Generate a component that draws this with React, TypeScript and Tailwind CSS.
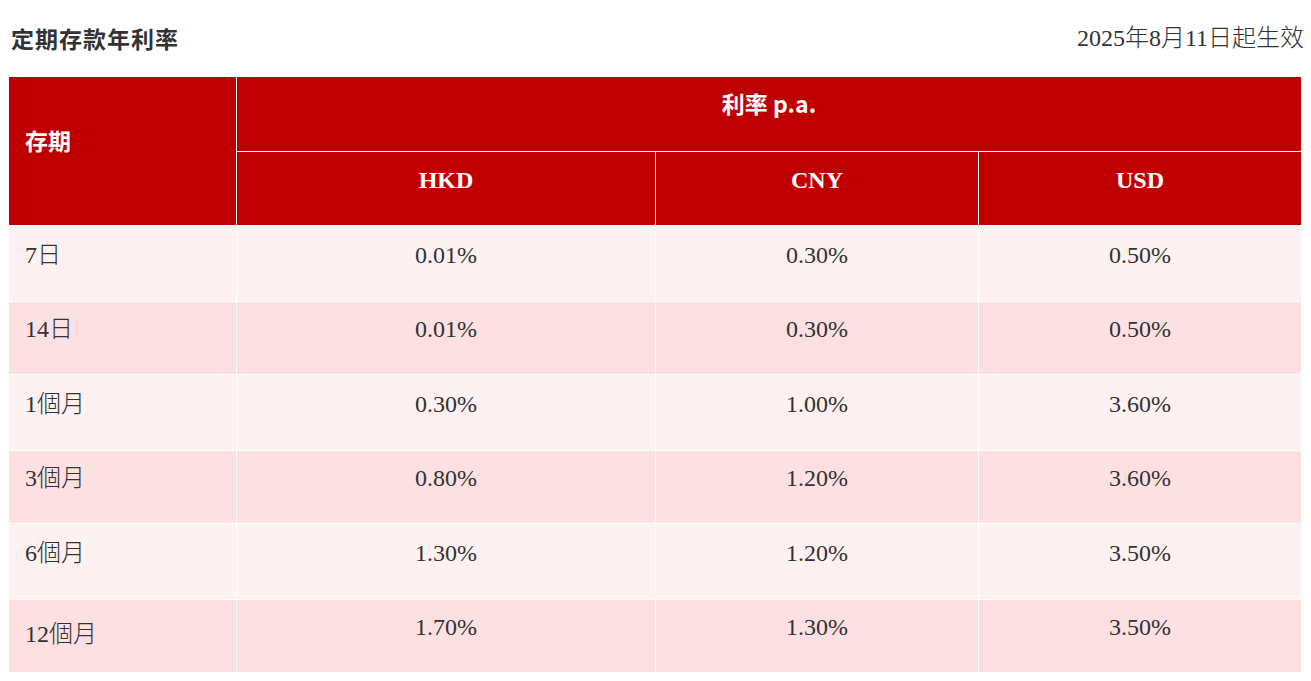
import React from "react";

const serif = "font-['Liberation_Serif','Noto_Sans_CJK_TC',serif]";
const sans = "font-['Noto_Sans_CJK_TC','Noto_Sans',sans-serif]";

const rows = [
  { term: "7日", hkd: "0.01%", cny: "0.30%", usd: "0.50%" },
  { term: "14日", hkd: "0.01%", cny: "0.30%", usd: "0.50%" },
  { term: "1個月", hkd: "0.30%", cny: "1.00%", usd: "3.60%" },
  { term: "3個月", hkd: "0.80%", cny: "1.20%", usd: "3.60%" },
  { term: "6個月", hkd: "1.30%", cny: "1.20%", usd: "3.50%" },
  { term: "12個月", hkd: "1.70%", cny: "1.30%", usd: "3.50%" },
];

export default function App() {
  return (
    <div className="w-[1311px] h-[681px] bg-white overflow-hidden">
      <div className="flex items-center justify-between h-[76px] pl-[11px] pr-[7px]">
        <h2 className={`${sans} text-[23px] leading-[32px] tracking-[1px] font-bold text-[#333]`}>
          定期存款年利率
        </h2>
        <div className={`${serif} text-[24px] leading-[32px] font-light text-[#333]`}>
          2025年8月11日起生效
        </div>
      </div>
      <table className="ml-[8px] w-[1293px] table-fixed border-collapse">
        <colgroup>
          <col className="w-[228px]" />
          <col className="w-[419px]" />
          <col className="w-[323px]" />
          <col className="w-[323px]" />
        </colgroup>
        <thead>
          <tr className="h-[75px]">
            <th
              rowSpan={2}
              className={`${sans} bg-[#bf0000] border border-white text-left align-top pl-[16px] pt-[45px] text-[23px] leading-[36px] font-bold text-white`}
            >
              存期
            </th>
            <th
              colSpan={3}
              className={`${sans} bg-[#bf0000] border border-white text-center align-top pt-[8px] text-[23px] leading-[36px] font-bold text-white`}
            >
              利率 p.a.
            </th>
          </tr>
          <tr className="h-[74px]">
            {["HKD", "CNY", "USD"].map((c) => (
              <th
                key={c}
                className={`${serif} bg-[#bf0000] border border-white text-center align-top pt-[10px] text-[24px] leading-[36px] font-bold text-white`}
              >
                {c}
              </th>
            ))}
          </tr>
        </thead>
        <tbody>
          {rows.map((r, i) => {
            const light = i % 2 === 0;
            const bg = light ? "bg-[#fef1f1]" : "bg-[#fde0e1]";
            const h = light ? "h-[76px]" : "h-[73px]";
            const pt = light ? "pt-[11px]" : "pt-[9px]";
            const last = i === rows.length - 1;
            return (
              <tr key={r.term} className={h}>
                <td
                  className={`${serif} ${bg} border border-white align-top pl-[16px] ${last ? "pt-[16px]" : pt} text-[24px] leading-[36px] font-light text-[#333]`}
                >
                  {r.term}
                </td>
                {[r.hkd, r.cny, r.usd].map((v, j) => (
                  <td
                    key={j}
                    className={`${serif} ${bg} border border-white align-top text-center ${pt} text-[24px] leading-[36px] font-light text-[#333]`}
                  >
                    {v}
                  </td>
                ))}
              </tr>
            );
          })}
        </tbody>
      </table>
    </div>
  );
}
